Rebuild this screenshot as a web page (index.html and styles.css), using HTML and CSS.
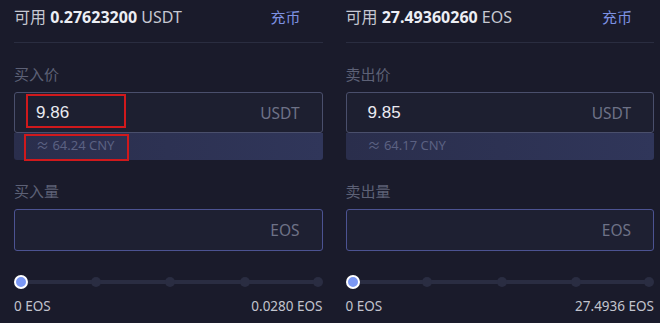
FILE: index.html
```html
<!DOCTYPE html>
<html>
<head>
<meta charset="utf-8">
<link rel="stylesheet" href="styles.css">
</head>
<body>
<div class="page">
  <section class="col">
    <div class="head">
      <span class="avail">可用 <b>0.27623200</b> USDT</span>
      <span class="deposit">充币</span>
    </div>
    <div class="label">买入价</div>
    <div class="field">
      <div class="input price"><span class="val">9.86</span><span class="unit">USDT</span></div>
      <div class="cny">≈ 64.24 CNY</div>
      <div class="mark mark-val"></div>
      <div class="mark mark-cny"></div>
    </div>
    <div class="label">买入量</div>
    <div class="input qty"><span class="val"></span><span class="unit">EOS</span></div>
    <div class="slider">
      <span class="stop"><i class="knob"></i></span>
      <span class="stop"><i class="dot"></i></span>
      <span class="stop"><i class="dot"></i></span>
      <span class="stop"><i class="dot"></i></span>
      <span class="stop"><i class="dot"></i></span>
    </div>
    <div class="range"><span>0 EOS</span><span>0.0280 EOS</span></div>
  </section>
  <section class="col">
    <div class="head">
      <span class="avail">可用 <b>27.49360260</b> EOS</span>
      <span class="deposit">充币</span>
    </div>
    <div class="label">卖出价</div>
    <div class="field">
      <div class="input price"><span class="val">9.85</span><span class="unit">USDT</span></div>
      <div class="cny">≈ 64.17 CNY</div>
    </div>
    <div class="label">卖出量</div>
    <div class="input qty"><span class="val"></span><span class="unit">EOS</span></div>
    <div class="slider">
      <span class="stop"><i class="knob"></i></span>
      <span class="stop"><i class="dot"></i></span>
      <span class="stop"><i class="dot"></i></span>
      <span class="stop"><i class="dot"></i></span>
      <span class="stop"><i class="dot"></i></span>
    </div>
    <div class="range"><span>0 EOS</span><span>27.4936 EOS</span></div>
  </section>
</div>
</body>
</html>
```
FILE: styles.css
```css
html, body {
  margin: 0;
  padding: 0;
  background: #1a1b2b;
}
body {
  font-family: "Noto Sans", "Noto Sans CJK SC", sans-serif;
  color: #c9cbd6;
}
.page {
  display: flex;
  gap: 23px;
  padding: 0 6px 0 14px;
  width: 640px;
}
.col {
  width: 309px;
  display: flex;
  flex-direction: column;
}
.head {
  height: 43px;
  box-sizing: border-box;
  padding-top: 6px;
  border-bottom: 1px solid #2a2d40;
  display: flex;
  justify-content: space-between;
  align-items: flex-start;
  font-size: 16px;
  line-height: 22px;
  padding-right: 22px;
}
.avail {
  color: #c6c8d2;
}
.avail b {
  color: #eceef4;
  font-weight: 700;
}
.deposit {
  color: #7d91e2;
  font-size: 15px;
}
.label {
  margin-top: 21px;
  height: 20px;
  line-height: 20px;
  font-size: 15px;
  color: #5d6176;
}
.field {
  position: relative;
  margin-top: 8px;
}
.input {
  box-sizing: border-box;
  height: 41px;
  border: 1px solid #4a4f6c;
  border-radius: 3px;
  background: #1d1f30;
  display: flex;
  justify-content: space-between;
  align-items: center;
  padding: 0 22px 0 21px;
}
.input .val {
  font-family: "Liberation Sans", "Noto Sans", sans-serif;
  font-size: 17px;
  color: #eaeaf0;
}
.input .unit {
  font-size: 15.5px;
  color: #6e7287;
}
.cny {
  height: 27px;
  line-height: 25px;
  box-sizing: border-box;
  background: linear-gradient(90deg, #2a2e4c, #30365a);
  border-radius: 0 0 3px 3px;
  padding-left: 22px;
  font-size: 13px;
  color: #5b6182;
}
.qty {
  margin-top: 8px;
  height: 42px;
  border-color: #4c5392;
  background: #1e2032;
}
.mark {
  position: absolute;
  border: 2px solid #d0191c;
  box-sizing: border-box;
}
.mark-val {
  left: 12px;
  top: 2px;
  width: 100px;
  height: 34px;
}
.mark-cny {
  left: 10px;
  top: 42px;
  width: 105px;
  height: 27px;
}
.slider {
  position: relative;
  margin-top: 24px;
  height: 14px;
  display: flex;
  justify-content: space-between;
}
.slider::before {
  content: "";
  position: absolute;
  left: 7px;
  right: 5px;
  top: 5px;
  height: 4px;
  background: #2a2d42;
}
.stop {
  position: relative;
  width: 14px;
  height: 14px;
  display: flex;
  align-items: center;
  justify-content: center;
}
.stop:last-child {
  width: 10px;
}
.knob {
  width: 10px;
  height: 10px;
  border-radius: 50%;
  background: #7b98f4;
  border: 2px solid #ffffff;
}
.dot {
  width: 10px;
  height: 10px;
  border-radius: 50%;
  background: #2a2d42;
}
.range {
  margin-top: 9px;
  display: flex;
  justify-content: space-between;
  font-size: 13.5px;
  line-height: 16px;
  color: #c2c4ce;
}
```
